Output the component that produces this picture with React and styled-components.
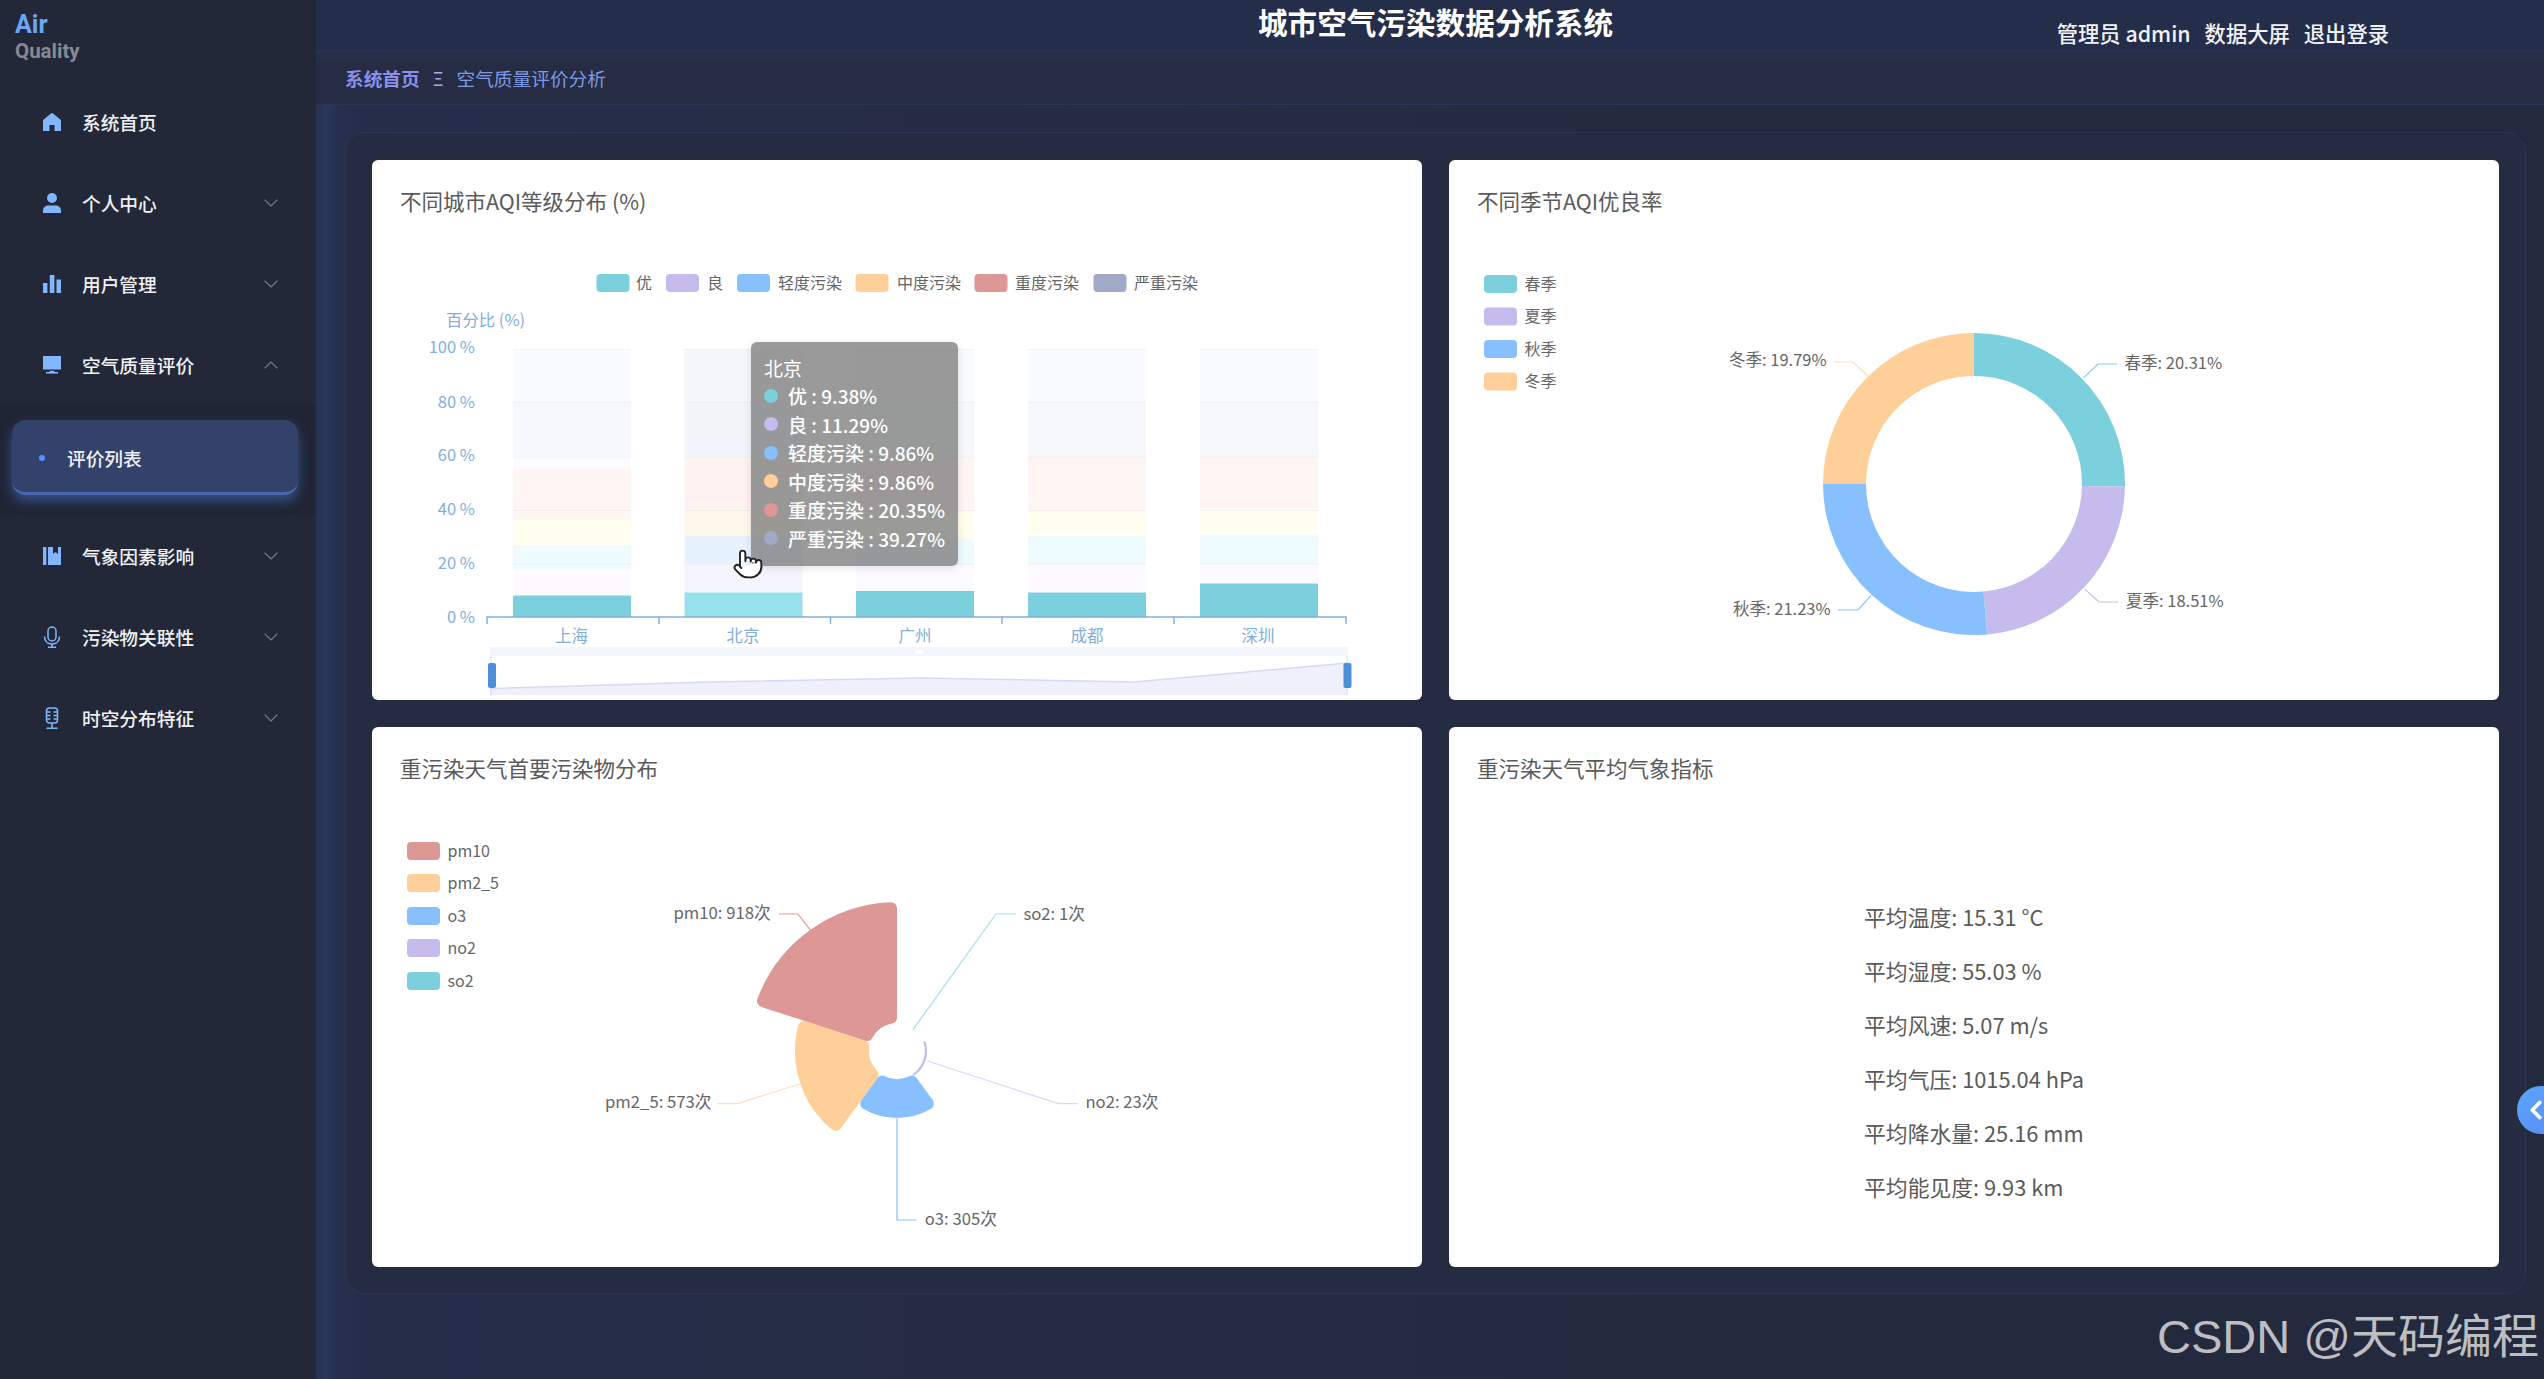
import React from "react";
import styled, { createGlobalStyle } from "styled-components";
import { ChevronDown, ChevronUp, ChevronLeft, Pointer } from "lucide-react";

const FONT = `"Noto Sans CJK SC", "Noto Sans", sans-serif`;

const COLORS = {
  teal: "#7ccfdc",
  lilac: "#c5bbec",
  blue: "#87bfff",
  orange: "#ffcf99",
  red: "#dd9795",
  slate: "#a0a9c5",
};

const GlobalStyle = createGlobalStyle`
  html, body {
    margin: 0;
    padding: 0;
    height: 100%;
    background: #242a3f;
    font-family: ${FONT};
  }
`;

const Shell = styled.div`
  position: relative;
  display: flex;
  width: 100%;
  height: 100vh;
  overflow: hidden;
`;

const Sidebar = styled.aside`
  width: 316px;
  flex-shrink: 0;
  background: #232838;
`;

const Logo = styled.div`
  height: 81px;
  box-sizing: border-box;
  padding: 11px 0 0 15px;
  font-family: Roboto, sans-serif;
  font-weight: 700;
  line-height: 27px;
`;

const LogoAir = styled.div`
  color: #6ba6f7;
  font-size: 25px;
`;

const LogoQuality = styled.div`
  color: #858a96;
  font-size: 20.5px;
`;

const MenuItem = styled.div`
  display: flex;
  align-items: center;
  height: 81px;
  padding-left: 43px;
  color: #eef0f4;
  font-size: 18.7px;
  font-weight: 500;
`;

const MenuIcon = styled.span`
  display: flex;
  width: 39px;
  color: #82b6ff;
`;

const MenuArrow = styled.span`
  display: flex;
  margin-left: auto;
  margin-right: 33px;
  color: #747985;
`;

const SubMenu = styled.div`
  height: 110px;
  box-sizing: border-box;
  padding: 15px 18px 0 12px;
  background: #202535;
`;

const SubItem = styled.div`
  display: flex;
  align-items: center;
  height: 75px;
  box-sizing: border-box;
  padding: 3px 0 0 27px;
  border-radius: 14px;
  border-bottom: 3px solid #4a68b0;
  background: #33426b;
  box-shadow: 0 6px 12px rgba(72, 108, 190, 0.6);
  color: #eef0f4;
  font-size: 18.7px;
  font-weight: 500;
`;

const SubDot = styled.span`
  width: 6px;
  height: 6px;
  margin-right: 22px;
  border-radius: 50%;
  background: #5c8dff;
`;

const Main = styled.main`
  flex: 1;
  min-width: 0;
  display: flex;
  flex-direction: column;
  background: linear-gradient(90deg, #263152 0, #2a365a 9px, #27304f 22px, #262d4a 42px, #242a3e 60%);
`;

const Header = styled.header`
  display: flex;
  align-items: flex-start;
  height: 51px;
  box-sizing: border-box;
  padding: 0 155px 0 942px;
  border-bottom: 1px solid #2a3553;
  background: #242d49;
`;

const SystemTitle = styled.h1`
  margin: 0;
  color: #ffffff;
  font-size: 29.6px;
  font-weight: 700;
  line-height: 44px;
  white-space: nowrap;
`;

const UserBar = styled.div`
  display: flex;
  gap: 14px;
  margin-left: auto;
  margin-top: 18px;
  color: #f2f3f6;
  font-size: 21.3px;
  font-weight: 500;
  line-height: 30px;
  white-space: nowrap;
`;

const Breadcrumb = styled.nav`
  display: flex;
  align-items: center;
  height: 54px;
  box-sizing: border-box;
  padding-left: 29px;
  border-bottom: 1px solid #2d3659;
  background: linear-gradient(180deg, #28324e 0, #252c44 14px, #252c44 100%);
  font-size: 18.7px;
`;

const CrumbHome = styled.span`
  color: #8a8fea;
  font-weight: 700;
`;

const CrumbSep = styled.span`
  margin: 0 13px;
  color: #a5a9ef;
  font-size: 18px;
`;

const CrumbCurrent = styled.span`
  color: #7f9ae4;
`;

const Content = styled.div`
  flex: 1;
  padding: 27px 18px 0 29px;
`;

const Panel = styled.section`
  display: grid;
  grid-template-columns: 1050px 1050px;
  grid-template-rows: 540px 540px;
  gap: 27px;
  width: 2181px;
  height: 1162px;
  box-sizing: border-box;
  padding: 27px 26px;
  border: 1px solid #2e3652;
  border-radius: 20px;
  background: #252b40;
`;

const Card = styled.article`
  position: relative;
  display: flex;
  flex-direction: column;
  border-radius: 6px;
  background: #ffffff;
`;

const CardTitle = styled.h3`
  flex-shrink: 0;
  height: 72px;
  box-sizing: border-box;
  margin: 0;
  padding: 26px 0 0 28px;
  color: #5a5a5a;
  font-size: 21.5px;
  font-weight: 400;
  line-height: 30px;
`;

const ChartSvg = styled.svg`
  display: block;
  width: 1050px;
  height: 468px;
`;

const ChartText = styled.text`
  font-family: ${FONT};
  font-size: ${(p) => p.$size || 16}px;
  fill: ${(p) => p.$color || "#666666"};
  text-anchor: ${(p) => p.$anchor || "start"};
  dominant-baseline: central;
  transform: translateY(-1.5px);
`;

const Leader = styled.polyline`
  fill: none;
  stroke: ${(p) => p.$color};
  stroke-width: 1.2;
`;

const Tooltip = styled.div`
  position: absolute;
  left: 379px;
  top: 182px;
  width: 207px;
  height: 224px;
  box-sizing: border-box;
  padding: 11.5px 0 0 13px;
  border-radius: 6px;
  background: rgba(126, 126, 126, 0.78);
  color: #ffffff;
  font-size: 19px;
  box-shadow: 0 2px 8px rgba(0, 0, 0, 0.12);
`;

const TipTitle = styled.div`
  height: 28px;
  line-height: 28px;
`;

const TipRow = styled.div`
  display: flex;
  align-items: center;
  height: 28.5px;
  font-weight: 500;
  white-space: nowrap;
`;

const TipDot = styled.span`
  width: 14px;
  height: 14px;
  margin-right: 10px;
  border-radius: 50%;
  background: ${(p) => p.$color};
`;

const Cursor = styled.div`
  position: absolute;
  left: 360px;
  top: 388px;
  display: flex;
  color: #222222;
`;

const StatsBody = styled.div`
  flex: 1;
  display: flex;
  flex-direction: column;
  align-items: center;
  justify-content: center;
  padding-top: 37px;
`;

const StatsList = styled.div`
  display: flex;
  flex-direction: column;
`;

const StatLine = styled.div`
  height: 54px;
  color: #5a5a5a;
  font-size: 21.8px;
  line-height: 54px;
  white-space: nowrap;
`;

const DrawerToggle = styled.div`
  position: absolute;
  right: 0;
  top: 1086px;
  width: 27px;
  height: 48px;
  display: flex;
  align-items: center;
  padding-left: 4px;
  box-sizing: border-box;
  overflow: hidden;
  border-radius: 24px 0 0 24px;
  background: linear-gradient(135deg, #5aa7ff, #5a8ff5);
  color: #ffffff;
`;

const ToggleArrow = styled(ChevronLeft)`
  flex-shrink: 0;
`;

const Watermark = styled.div`
  position: absolute;
  right: 5px;
  top: 1303px;
  color: #bdbec2;
  font-family: "Liberation Sans", "Noto Sans CJK SC", sans-serif;
  font-size: 47px;
  line-height: 68px;
  white-space: nowrap;
`;

const HomeIcon = () => (
  <svg width="18" height="18" viewBox="0 0 18 18">
    <path d="M9 0 Q9.6 0 10 .5 L18 7 V18 H11.5 V12 H6.5 V18 H0 V7 L8 .5 Q8.4 0 9 0 Z" fill="currentColor" />
  </svg>
);

const UserIcon = () => (
  <svg width="18" height="20" viewBox="0 0 18 20">
    <circle cx="9" cy="5" r="5" fill="currentColor" />
    <path d="M0 20 V17.5 C0 14.5 2.5 12.5 5.5 12.5 H12.5 C15.5 12.5 18 14.5 18 17.5 V20 Z" fill="currentColor" />
  </svg>
);

const BarsIcon = () => (
  <svg width="18" height="18" viewBox="0 0 18 18">
    <rect x="0" y="8" width="4.4" height="10" fill="currentColor" />
    <rect x="6.8" y="0" width="4.6" height="18" fill="currentColor" />
    <rect x="13.5" y="4.5" width="4.5" height="13.5" fill="currentColor" />
  </svg>
);

const MonitorIcon = () => (
  <svg width="18" height="18" viewBox="0 0 18 18">
    <rect x="0" y="0" width="18" height="13.5" fill="currentColor" />
    <rect x="3" y="16" width="12" height="1.6" fill="currentColor" />
    <rect x="6.5" y="14.8" width="5" height="1.4" fill="currentColor" />
  </svg>
);

const BookIcon = () => (
  <svg width="18" height="18" viewBox="0 0 18 18">
    <rect x="0" y="0" width="3.4" height="18" fill="currentColor" />
    <path d="M5 0 H10 V7 L12.5 5 L15 7 V0 H18 V18 H5 Z" fill="currentColor" />
  </svg>
);

const MicIcon = () => (
  <svg width="18" height="22" viewBox="0 0 18 22" fill="none" stroke="currentColor" strokeWidth="1.5">
    <rect x="5" y="1" width="8" height="14" rx="4" />
    <path d="M1.5 10.5 C1.5 15 4.5 18 9 18 C13.5 18 16.5 15 16.5 10.5" />
    <path d="M9 18 V21 M5 21.2 H13" />
  </svg>
);

const MicStandIcon = () => (
  <svg width="18" height="22" viewBox="0 0 18 22" fill="none" stroke="currentColor" strokeWidth="1.5">
    <rect x="3.5" y="1" width="11" height="15" rx="3" />
    <path d="M3.5 5 H7.5 M10.5 5 H14.5 M3.5 8.5 H7.5 M10.5 8.5 H14.5 M3.5 12 H7.5 M10.5 12 H14.5" />
    <path d="M9 16 V21 M3.5 21.2 H14.5" />
  </svg>
);

const menuTop = [
  { label: "系统首页", icon: <HomeIcon /> },
  { label: "个人中心", icon: <UserIcon />, arrow: true },
  { label: "用户管理", icon: <BarsIcon />, arrow: true },
  { label: "空气质量评价", icon: <MonitorIcon />, arrow: true, open: true },
];

const menuBottom = [
  { label: "气象因素影响", icon: <BookIcon />, arrow: true },
  { label: "污染物关联性", icon: <MicIcon />, arrow: true },
  { label: "时空分布特征", icon: <MicStandIcon />, arrow: true },
];

const NavRow = ({ item }) => (
  <MenuItem>
    <MenuIcon>{item.icon}</MenuIcon>
    {item.label}
    {item.arrow && (
      <MenuArrow>
        {item.open ? <ChevronUp size={24} strokeWidth={1.1} /> : <ChevronDown size={24} strokeWidth={1.1} />}
      </MenuArrow>
    )}
  </MenuItem>
);

const rad = (a) => (a * Math.PI) / 180;
const pt = (cx, cy, r, a) => `${cx + r * Math.sin(rad(a))} ${cy - r * Math.cos(rad(a))}`;

// 圆环扇形
const ringPath = (cx, cy, r0, r1, a0, a1) =>
  `M${pt(cx, cy, r0, a0)} L${pt(cx, cy, r1, a0)} A${r1} ${r1} 0 ${a1 - a0 > 180 ? 1 : 0} 1 ${pt(cx, cy, r1, a1)} L${pt(cx, cy, r0, a1)} A${r0} ${r0} 0 0 0 ${pt(cx, cy, r0, a0)} Z`;

// 圆角玫瑰扇形，圆角靠描边的 round join 实现
const rosePath = (cx, cy, r0, r1, a0, a1, c) => {
  const rO = r1 - c;
  const rI = r0 + c;
  const dO = (Math.asin(c / rO) * 180) / Math.PI;
  const dI = (Math.asin(c / rI) * 180) / Math.PI;
  return `M${pt(cx, cy, rI, a0 + dI)} L${pt(cx, cy, rO, a0 + dO)} A${rO} ${rO} 0 0 1 ${pt(cx, cy, rO, a1 - dO)} L${pt(cx, cy, rI, a1 - dI)} A${rI} ${rI} 0 0 0 ${pt(cx, cy, rI, a0 + dI)} Z`;
};

const Legend = ({ items }) =>
  items.map((l) => (
    <g key={l.label}>
      <rect x={l.x} y={l.y - 9} width="33" height="18" rx="4" fill={l.color} />
      <ChartText x={l.tx} y={l.y}>
        {l.label}
      </ChartText>
    </g>
  ));

const cityLegend = [
  { label: "优", color: COLORS.teal, x: 596.5, tx: 636, y: 283 },
  { label: "良", color: COLORS.lilac, x: 666, tx: 707, y: 283 },
  { label: "轻度污染", color: COLORS.blue, x: 737, tx: 778, y: 283 },
  { label: "中度污染", color: COLORS.orange, x: 855.5, tx: 897, y: 283 },
  { label: "重度污染", color: COLORS.red, x: 974.5, tx: 1015, y: 283 },
  { label: "严重污染", color: COLORS.slate, x: 1093.5, tx: 1134, y: 283 },
];

const yTicks = [
  ["100 %", 347],
  ["80 %", 402],
  ["60 %", 455],
  ["40 %", 509],
  ["20 %", 563],
  ["0 %", 617],
];

const fadedColors = ["#fdfbff", "#eefbff", "#fffeef", "#fff6f4", "#f6f8fb"];
const hoverColors = ["#f6f4fd", "#e6f3ff", "#fff7e9", "#fff3f1", "#f1f4f9"];

const cityBars = [
  { city: "上海", x: 513, cx: 571.5, tops: [595.3, 569.3, 545, 519.3, 467.3, 349], gap: 456.7 },
  { city: "北京", x: 684.5, cx: 743, tops: [592.3, 563.3, 535.7, 510, 456.7, 349], hover: true },
  { city: "广州", x: 856, cx: 915, tops: [590.7, 565, 539, 511.7, 456.7, 349] },
  { city: "成都", x: 1028, cx: 1087, tops: [592.3, 564.3, 536, 511.7, 456.7, 349] },
  { city: "深圳", x: 1200, cx: 1258, tops: [583.3, 563.3, 534.3, 508.3, 456, 349] },
];

const AQIChart = () => (
  <ChartSvg viewBox="372 232 1050 468">
    <Legend items={cityLegend} />
    <ChartText x="446" y="320" $color="#7fb0dd" $size={16.4}>
      百分比 (%)
    </ChartText>
    {yTicks.map(([t, y]) => (
      <ChartText key={t} x="475" y={y} $anchor="end" $color="#7fb0dd" $size={16.5}>
        {t}
      </ChartText>
    ))}
    {cityBars.map((b) => {
      const pal = b.hover ? hoverColors : fadedColors;
      return (
        <g key={b.city}>
          <rect x={b.x} y={b.tops[0]} width="118" height={617 - b.tops[0]} fill={b.hover ? "#95e0ea" : COLORS.teal} />
          {pal.map((c, i) => (
            <rect key={c} x={b.x} y={b.tops[i + 1]} width="118" height={b.tops[i] - b.tops[i + 1]} fill={c} />
          ))}
          {b.gap && <rect x={b.x} y={b.gap} width="118" height={b.tops[4] - b.gap} fill="#fbfcfe" />}
          <rect x={b.x} y="349" width="118" height="52.7" fill={b.hover ? "#f5f7fa" : "#fafbfe"} />
          {[349, 401.7, 456.7, 510, 563.3].map((y) => (
            <rect key={y} x={b.x} y={y} width="118" height="1" fill="#e4e7ef" opacity="0.5" />
          ))}
          <ChartText x={b.cx} y="636" $anchor="middle" $color="#7fb0dd" $size={16.5}>
            {b.city}
          </ChartText>
        </g>
      );
    })}
    <path d="M487 624 V617 H1346 V624 M659 617 V624 M830.5 617 V624 M1002 617 V624 M1174 617 V624" fill="none" stroke="#7fb0dd" strokeWidth="1.5" />
    <rect x="490" y="647" width="858" height="9" fill="#f4f6fd" />
    <rect x="915" y="650" width="8" height="4" fill="#ffffff" />
    <path d="M490 688.5 L708 682 L921 678 L1134 682 L1348 663 V695 H490 Z" fill="#eff0fb" stroke="none" />
    <path d="M490 688.5 L708 682 L921 678 L1134 682 L1348 663" fill="none" stroke="#d6daf3" strokeWidth="1.4" />
    <path d="M491 656 V695 M1347 656 V695" fill="none" stroke="#d5daf0" strokeWidth="1" />
    <rect x="488" y="663" width="8" height="25" rx="2" fill="#4d90d9" />
    <rect x="1343.5" y="663" width="8" height="25" rx="2" fill="#4d90d9" />
  </ChartSvg>
);

const seasonLegend = [
  { label: "春季", color: COLORS.teal, x: 1484, tx: 1524.5, y: 284 },
  { label: "夏季", color: COLORS.lilac, x: 1484, tx: 1524.5, y: 316.5 },
  { label: "秋季", color: COLORS.blue, x: 1484, tx: 1524.5, y: 349 },
  { label: "冬季", color: COLORS.orange, x: 1484, tx: 1524.5, y: 381.5 },
];

const seasonSlices = [
  { color: COLORS.teal, a0: 0, a1: 91 },
  { color: COLORS.lilac, a0: 91, a1: 175 },
  { color: COLORS.blue, a0: 175, a1: 270 },
  { color: COLORS.orange, a0: 270, a1: 360 },
];

const seasonLabels = [
  { text: "春季: 20.31%", x: 2124.5, y: 363, color: COLORS.teal, line: "2083.7,377.6 2098,364 2117,364" },
  { text: "夏季: 18.51%", x: 2126, y: 601.5, color: COLORS.lilac, line: "2085,589.4 2099,602 2118,602" },
  { text: "秋季: 21.23%", x: 1733, y: 609.4, color: COLORS.blue, line: "1871,595.6 1858,610 1838,610" },
  { text: "冬季: 19.79%", x: 1729, y: 360, color: "#ffe0bd", line: "1868,376 1853,362 1834,362" },
];

const SeasonChart = () => (
  <ChartSvg viewBox="1449 232 1050 468">
    <Legend items={seasonLegend} />
    {seasonSlices.map((s) => (
      <path key={s.color} d={ringPath(1974, 484, 108, 151, s.a0, s.a1)} fill={s.color} />
    ))}
    {seasonLabels.map((l) => (
      <g key={l.text}>
        <Leader points={l.line} $color={l.color} />
        <ChartText x={l.x} y={l.y} $size={16.5}>
          {l.text}
        </ChartText>
      </g>
    ))}
  </ChartSvg>
);

const pollutantLegend = [
  { label: "pm10", color: COLORS.red, x: 407, tx: 447.5, y: 851 },
  { label: "pm2_5", color: COLORS.orange, x: 407, tx: 447.5, y: 883 },
  { label: "o3", color: COLORS.blue, x: 407, tx: 447.5, y: 916 },
  { label: "no2", color: COLORS.lilac, x: 407, tx: 447.5, y: 948 },
  { label: "so2", color: COLORS.teal, x: 407, tx: 447.5, y: 981 },
];

const roseSlices = [
  { color: COLORS.blue, r: 67, a0: 144, a1: 216 },
  { color: COLORS.orange, r: 102, a0: 216, a1: 288 },
  { color: COLORS.red, r: 149, a0: 288, a1: 360 },
];

const roseLabels = [
  { text: "pm10: 918次", x: 673.5, y: 913.5, color: COLORS.red, line: "810.6,930.4 798,914 779,914" },
  { text: "so2: 1次", x: 1023.4, y: 914, color: "#9fe0e8", line: "913,1029.6 996,914 1016,914" },
  { text: "no2: 23次", x: 1085.4, y: 1102, color: "#dcd6f5", line: "927.5,1061 1058.6,1103.6 1077.7,1103.6" },
  { text: "o3: 305次", x: 924.7, y: 1219, color: COLORS.blue, line: "897,1118.4 897,1220 916.5,1220" },
  { text: "pm2_5: 573次", x: 605, y: 1102, color: "#ffe0bd", line: "799.6,1084 737.6,1103.6 717,1103.6" },
];

const PollutantChart = () => (
  <ChartSvg viewBox="372 799 1050 468">
    <Legend items={pollutantLegend} />
    <path
      d={`M${pt(897, 1051, 29, 72)} A29 29 0 0 1 ${pt(897, 1051, 29, 144)}`}
      fill="none"
      stroke={COLORS.lilac}
      strokeWidth="2.2"
      strokeLinecap="round"
    />
    {roseSlices.map((s) => (
      <path
        key={s.color}
        d={rosePath(897, 1051, 28, s.r, s.a0, s.a1, 6)}
        fill={s.color}
        stroke={s.color}
        strokeWidth="12"
        strokeLinejoin="round"
      />
    ))}
    {roseLabels.map((l) => (
      <g key={l.text}>
        <Leader points={l.line} $color={l.color} />
        <ChartText x={l.x} y={l.y} $size={16.7}>
          {l.text}
        </ChartText>
      </g>
    ))}
  </ChartSvg>
);

const tipRows = [
  { label: "优 : 9.38%", color: COLORS.teal },
  { label: "良 : 11.29%", color: COLORS.lilac },
  { label: "轻度污染 : 9.86%", color: COLORS.blue },
  { label: "中度污染 : 9.86%", color: COLORS.orange },
  { label: "重度污染 : 20.35%", color: COLORS.red },
  { label: "严重污染 : 39.27%", color: COLORS.slate },
];

const stats = [
  "平均温度: 15.31 °C",
  "平均湿度: 55.03 %",
  "平均风速: 5.07 m/s",
  "平均气压: 1015.04 hPa",
  "平均降水量: 25.16 mm",
  "平均能见度: 9.93 km",
];

const App = () => {
  return (
    <Shell>
      <GlobalStyle />
      <Sidebar>
        <Logo>
          <LogoAir>Air</LogoAir>
          <LogoQuality>Quality</LogoQuality>
        </Logo>
        {menuTop.map((item) => (
          <NavRow key={item.label} item={item} />
        ))}
        <SubMenu>
          <SubItem>
            <SubDot />
            评价列表
          </SubItem>
        </SubMenu>
        {menuBottom.map((item) => (
          <NavRow key={item.label} item={item} />
        ))}
      </Sidebar>
      <Main>
        <Header>
          <SystemTitle>城市空气污染数据分析系统</SystemTitle>
          <UserBar>
            <span>管理员 admin</span>
            <span>数据大屏</span>
            <span>退出登录</span>
          </UserBar>
        </Header>
        <Breadcrumb>
          <CrumbHome>系统首页</CrumbHome>
          <CrumbSep>Ξ</CrumbSep>
          <CrumbCurrent>空气质量评价分析</CrumbCurrent>
        </Breadcrumb>
        <Content>
          <Panel>
            <Card>
              <CardTitle>不同城市AQI等级分布 (%)</CardTitle>
              <AQIChart />
              <Tooltip>
                <TipTitle>北京</TipTitle>
                {tipRows.map((r) => (
                  <TipRow key={r.label}>
                    <TipDot $color={r.color} />
                    {r.label}
                  </TipRow>
                ))}
              </Tooltip>
              <Cursor>
                <Pointer size={32} strokeWidth={1.4} fill="#ffffff" />
              </Cursor>
            </Card>
            <Card>
              <CardTitle>不同季节AQI优良率</CardTitle>
              <SeasonChart />
            </Card>
            <Card>
              <CardTitle>重污染天气首要污染物分布</CardTitle>
              <PollutantChart />
            </Card>
            <Card>
              <CardTitle>重污染天气平均气象指标</CardTitle>
              <StatsBody>
                <StatsList>
                  {stats.map((s) => (
                    <StatLine key={s}>{s}</StatLine>
                  ))}
                </StatsList>
              </StatsBody>
            </Card>
          </Panel>
        </Content>
      </Main>
      <DrawerToggle>
        <ToggleArrow size={30} strokeWidth={3} />
      </DrawerToggle>
      <Watermark>CSDN @天码编程</Watermark>
    </Shell>
  );
};

export default App;
